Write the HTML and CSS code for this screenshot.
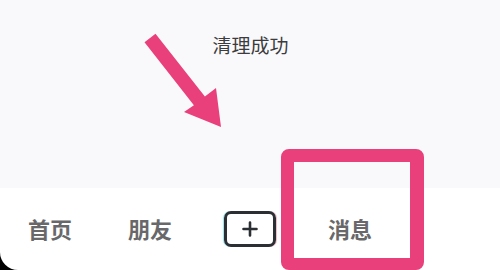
FILE: index.html
```html
<!DOCTYPE html>
<html lang="zh">
<head>
<meta charset="utf-8">
<link rel="stylesheet" href="styles.css">
</head>
<body>
<div class="screen">
  <div class="content">
    <div class="toast">清理成功</div>
  </div>
  <div class="nav-wrap">
    <nav class="nav">
      <div class="tab">首页</div>
      <div class="tab">朋友</div>
      <div class="tab"><div class="plus"><svg width="16" height="16" viewBox="0 0 16 16"><path d="M8 1.5V14.5M1.5 8H14.5" stroke="#2b2e33" stroke-width="2.6" stroke-linecap="round"/></svg></div></div>
      <div class="tab">消息</div>
      <div class="tab"></div>
    </nav>
  </div>
  <svg class="arrow" width="500" height="270" viewBox="0 0 500 270">
    <polygon points="155.5,33.7 204.9,96.6 216,88 221,127 184,112 193.9,105.2 144.5,42.3" fill="#e9407b"/>
  </svg>
  <div class="highlight"></div>
</div>
</body>
</html>
```
FILE: styles.css
```css
html, body {
  margin: 0;
  padding: 0;
  width: 500px;
  height: 270px;
  overflow: hidden;
  background: #f9f9fb;
}
.screen {
  position: relative;
  width: 500px;
  height: 270px;
  display: flex;
  flex-direction: column;
  font-family: "Noto Sans CJK SC", "Noto Sans", sans-serif;
}
.content {
  height: 188px;
  display: flex;
  justify-content: center;
  align-items: flex-start;
}
.toast {
  margin-top: 32px;
  margin-left: 1px;
  font-size: 19px;
  line-height: 26px;
  color: #3c3c3e;
}
.nav-wrap {
  flex: 1;
  background: #000;
}
.nav {
  height: 100%;
  background: #fff;
  border-bottom-left-radius: 18px;
  display: grid;
  grid-template-columns: repeat(5, 100px);
  align-items: center;
}
.tab {
  display: flex;
  justify-content: center;
  align-items: center;
  font-size: 22px;
  font-weight: 700;
  color: #68686a;
  padding-bottom: 2px;
}
.plus {
  width: 46px;
  height: 30px;
  border: 3px solid #2b2e33;
  border-radius: 7px;
  display: flex;
  align-items: center;
  justify-content: center;
  box-shadow: -1px 0 0 rgba(80, 220, 230, 0.6), 1px 0 0 rgba(240, 80, 110, 0.4);
  margin-top: 2px;
}
.arrow {
  position: absolute;
  left: 0;
  top: 0;
}
.highlight {
  position: absolute;
  left: 281px;
  top: 149px;
  width: 116px;
  height: 96px;
  border-style: solid;
  border-color: #e9407b;
  border-width: 13px 14px 12px 13px;
  border-radius: 8px;
}
```
